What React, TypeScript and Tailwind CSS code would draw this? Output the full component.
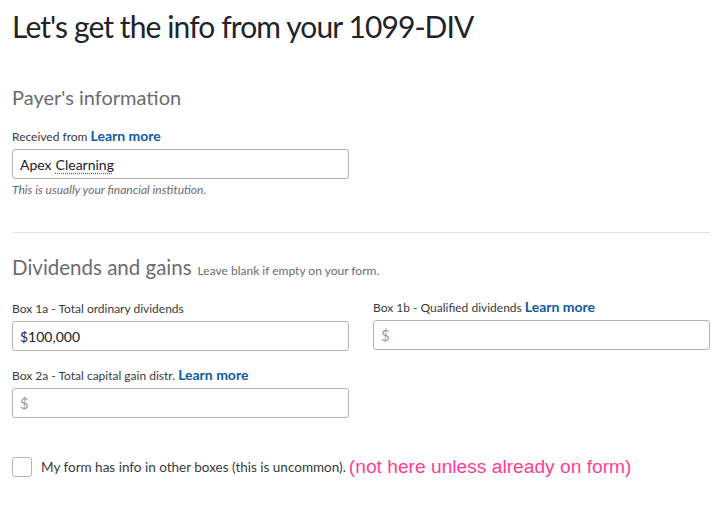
export default function App() {
  const font = { fontFamily: "Lato, 'Open Sans', sans-serif" };
  return (
    <div className="w-[720px] h-[505px] bg-white pl-[12px] pr-[10px] text-[#393a3d]" style={font}>
      <h1 className="pt-[6px] text-[30px] leading-[40px] tracking-[-0.9px] text-[#21232a] font-normal">Let's get the info from your 1099-DIV</h1>

      <h2 className="mt-[38px] text-[20px] leading-[26px] text-[#6b6c72]">Payer's information</h2>
      <div className="mt-[18px] text-[12px] leading-[16px] text-[#393a3d]">
        Received from <span className="text-[#0d5ba6] font-bold text-[14px]">Learn more</span>
      </div>
      <div className="mt-[4px] w-[337px] h-[30px] border border-[#b0b3b8] rounded-[3px] flex items-center px-[7px] text-[14px] text-[#21232a]">
        Apex <span className="ml-[4px] underline decoration-dotted decoration-red-500 underline-offset-[3px]">Clearning</span>
      </div>
      <div className="mt-[3px] text-[12px] italic text-[#6b6c72] leading-[16px]">This is usually your financial institution.</div>

      <div className="mt-[34px] h-px bg-[#e2e3e5]" />

      <div className="mt-[21px] flex items-baseline gap-[6px]">
        <span className="text-[20.5px] leading-[26px] text-[#6b6c72]">Dividends and gains</span>
        <span className="text-[12px] text-[#6b6c72]">Leave blank if empty on your form.</span>
      </div>

      <div className="mt-[21px] grid grid-cols-[337px_337px] gap-x-[24px]">
        <div>
          <div className="text-[12px] leading-[16px]">Box 1a - Total ordinary dividends</div>
          <div className="mt-[4px] h-[30px] border border-[#b0b3b8] rounded-[3px] flex items-center px-[7px] text-[14px] text-[#21232a]">$100,000</div>
        </div>
        <div>
          <div className="text-[12px] leading-[16px] -mt-[2px]">Box 1b - Qualified dividends <span className="text-[#0d5ba6] font-bold text-[14px]">Learn more</span></div>
          <div className="mt-[4px] h-[30px] border border-[#b0b3b8] rounded-[3px] flex items-center px-[7px] text-[15px] text-[#9a9ca1]">$</div>
        </div>
        <div className="mt-[16px]">
          <div className="text-[12px] leading-[16px]">Box 2a - Total capital gain distr. <span className="text-[#0d5ba6] font-bold text-[14px]">Learn more</span></div>
          <div className="mt-[4px] h-[30px] border border-[#b0b3b8] rounded-[3px] flex items-center px-[7px] text-[15px] text-[#9a9ca1]">$</div>
        </div>
      </div>

      <div className="mt-[38px] flex items-center h-[22px]">
        <div className="w-[20px] h-[20px] border border-[#b0b3b8] rounded-[3px]" />
        <span className="ml-[9px] text-[13.5px] text-[#393a3d]">My form has info in other boxes (this is uncommon).</span>
        <span className="ml-[3px] text-[19.2px] text-[#ff3d96]" style={{ fontFamily: "'Liberation Sans', Arial, sans-serif" }}>(not here unless already on form)</span>
      </div>
    </div>
  );
}
